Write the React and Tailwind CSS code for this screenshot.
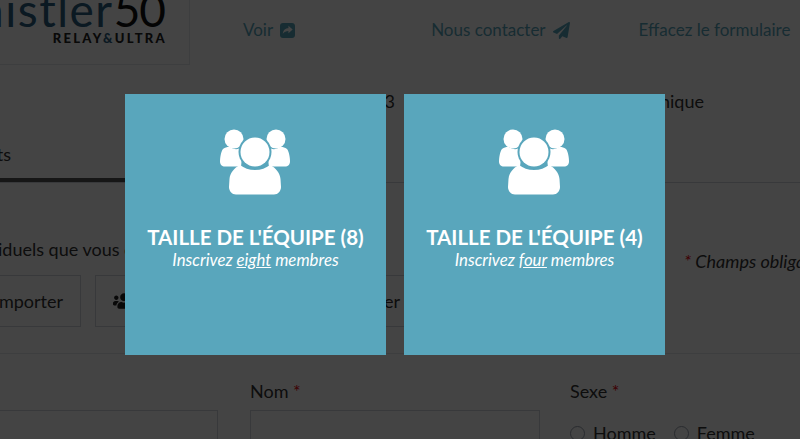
import { FaPaperPlane, FaUsers } from 'react-icons/fa';

function ShareIcon() {
  return (
    <svg viewBox="0 0 16 16" className="w-[15px] h-[15px]" fill="currentColor">
      <path fillRule="evenodd" d="M3 0h10c1.700 0 3 1.300 3 3v10c0 1.700-1.300 3-3 3H3c-1.700 0-3-1.300-3-3V3c0-1.700 1.300-3 3-3zm6 3v2.500C6 5.500 3.500 7 3 11.500 4.500 9.500 6.500 8.500 9 8.500V11l4.500-4z" />
    </svg>
  );
}

function TeamIcon() {
  return (
    <svg viewBox="0 0 70 66" className="w-[70px] h-[66px] mr-[2px] text-white" fill="currentColor">
      <circle cx="14" cy="10" r="9.500" />
      <circle cx="56" cy="10" r="9.500" />
      <path d="M3 20c3-2 6-2.500 8-1.500 3 2 6 2 8 1 3 3 3 12 2 18H5c-3 0-5-2-5-5 0-4 1-10 3-12.500z" />
      <path d="M67 20c-3-2-6-2.500-8-1.500-3 2-6 2-8 1-3 3-3 12-2 18h16c3 0 5-2 5-5 0-4-1-10-3-12.500z" />
      <circle cx="35" cy="23" r="16.500" className="text-[#59a6bc]" fill="currentColor" />
      <circle cx="35" cy="23" r="14.500" />
      <path d="M20 36c4 3 9 5 15 5s11-2 15-5c6 3 10 8 10.500 14l.500 8c0 4-3 7.500-7 7.500H16c-4 0-7-3.500-7-7.500l.500-8C10 44 14 39 20 36z" />
    </svg>
  );
}

function TeamCard({ title, word }) {
  return (
    <div className="w-[261px] h-[261px] bg-[#59a6bc] flex flex-col items-center pt-[35px] text-white">
      <TeamIcon />
      <h2 className="mt-[30px] text-[20.500px] leading-[24px] font-bold whitespace-nowrap">{title}</h2>
      <p className="text-[16.800px] leading-[21px] italic whitespace-nowrap">
        Inscrivez <span className="underline">{word}</span> membres
      </p>
    </div>
  );
}

export default function App() {
  return (
    <div className="relative h-[439px] w-[800px] overflow-hidden bg-white text-[#333] font-['Lato','Open_Sans',sans-serif]">
      {/* page behind the modal */}
      <header className="flex h-[65px]">
        <div className="w-[190px] shrink-0 border-r border-b border-gray-200 overflow-hidden flex flex-col items-end pr-[24px]">
          <div className="-mt-[8px] text-[46px] leading-[36px] tracking-[1.500px] whitespace-nowrap text-[#2c5d80]">
            histler<span className="text-[#111] tracking-[-1px]">50</span>
          </div>
          <div className="mt-[3px] text-[13px] leading-[14px] font-black tracking-[2.300px] -mr-[2px] text-[#222] whitespace-nowrap">
            RELAY<span className="text-[#2c5d80]">&amp;</span>ULTRA
          </div>
        </div>
        <nav className="flex-1 flex items-center text-[17px] text-[#59a6bc] pb-[5px]">
          <a className="ml-[53px] flex items-center gap-[7px]">Voir <ShareIcon /></a>
          <a className="ml-[136px] flex items-center gap-[7px]">Nous contacter <FaPaperPlane className="text-[17px]" /></a>
          <a className="ml-[69px]">Effacez le formulaire</a>
        </nav>
      </header>

      <div className="flex h-[72px] pl-[230px] pt-[26px] text-[18px] leading-[20px]">
        <span className="w-[165px] text-right shrink-0">2013</span>
        <span className="w-[309px] text-right shrink-0">Chronique</span>
      </div>

      <div className="h-[46px] border-b border-gray-300 text-[18px]">
        <div className="w-[125px] h-full border-b-[4px] border-[#555] overflow-hidden flex justify-end">
          <span className="pt-[4px] mr-[114px]">Résultats</span>
        </div>
      </div>

      <div className="flex h-[170px]">
        <div className="w-[660px] shrink-0 pt-[55px] overflow-hidden">
          <p className="text-[18px] leading-[22px] whitespace-nowrap -ml-[2px]">iduels que vous c</p>
          <div className="flex gap-[14px] mt-[15px] h-[52px] text-[18px]">
            <div className="w-[81px] border border-l-0 border-gray-300 flex items-center justify-end pr-[17px] whitespace-nowrap">mporter</div>
            <div className="w-[340px] border border-gray-300 flex items-center pl-[17px]">
              <FaUsers className="text-[22px] text-[#222] shrink-0" />
              <span className="ml-[249px] whitespace-nowrap">er c</span>
            </div>
          </div>
        </div>
        <p className="pt-[67px] pl-[24px] text-[18px] leading-[22px] italic whitespace-nowrap">
          <span className="text-red-600">*</span> Champs obligatoires
        </p>
      </div>

      <div className="border-t border-gray-200 flex pt-[26px] text-[18px] leading-[22px]">
        <div className="w-[250px] pt-[30px]">
          <div className="h-[40px] w-[218px] border border-l-0 border-gray-300" />
        </div>
        <div className="w-[320px]">
          Nom <span className="text-red-600">*</span>
          <div className="mt-[8px] h-[40px] w-[290px] border border-gray-300" />
        </div>
        <div>
          Sexe <span className="text-red-600">*</span>
          <div className="mt-[20px] flex items-center gap-[8px]">
            <span className="size-[15px] rounded-full border border-gray-400" />
            <span>Homme</span>
            <span className="ml-[10px] size-[15px] rounded-full border border-gray-400" />
            <span>Femme</span>
          </div>
        </div>
      </div>

      {/* modal overlay */}
      <div className="absolute inset-0 bg-black/[.733]" />
      <div className="absolute inset-0 flex gap-[18px] pl-[125px] pt-[94px]">
        <TeamCard title="TAILLE DE L'ÉQUIPE (8)" word="eight" />
        <TeamCard title="TAILLE DE L'ÉQUIPE (4)" word="four" />
      </div>
    </div>
  );
}
